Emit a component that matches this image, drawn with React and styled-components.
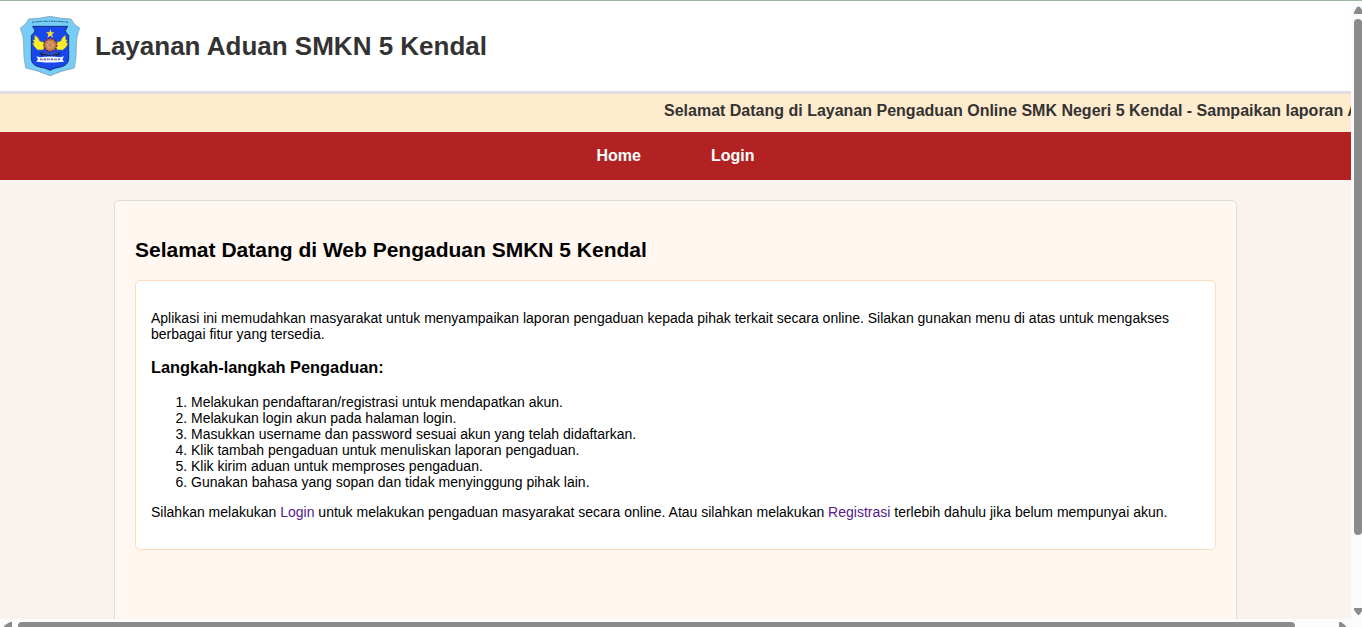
import React from "react";
import styled, { createGlobalStyle } from "styled-components";

const GlobalStyle = createGlobalStyle`
  * { box-sizing: border-box; }
  body {
    margin: 0;
    overflow: hidden;
    font-family: "Liberation Sans", Arial, sans-serif;
    font-size: 14px;
    color: #000;
  }
`;

const Viewport = styled.div`
  display: grid;
  grid-template-columns: minmax(0, 1fr) 11px;
  grid-template-rows: minmax(0, 1fr) 8px;
  width: 1362px;
  height: 627px;
  overflow: hidden;
  background: #fcfcfc;
  border-top: 1px solid #9fb59f;
`;

const Page = styled.div`
  overflow: hidden;
  background: #f8f3ec;
`;

const Header = styled.header`
  display: flex;
  align-items: center;
  gap: 15px;
  height: 93px;
  padding: 0 20px;
  background: #fff;
  border-bottom: 3px solid #dfdfdf;
`;

const Emblem = styled.svg`
  display: block;
  width: 60px;
  height: 60px;
`;

const SiteTitle = styled.h1`
  margin: 0;
  font-size: 26px;
  line-height: 30px;
  color: #333;
`;

const Ticker = styled.div`
  height: 38px;
  padding: 8px 0 0 664px;
  overflow: hidden;
  white-space: nowrap;
  background: #ffebcd;
  color: #333;
  font-size: 16px;
  font-weight: bold;
  line-height: 18px;
`;

const Nav = styled.nav`
  display: flex;
  justify-content: center;
  gap: 70px;
  height: 48px;
  background: #b22222;
`;

const NavLink = styled.a`
  color: #fff;
  font-size: 16px;
  font-weight: bold;
  line-height: 47px;
  text-decoration: none;
`;

const Container = styled.main`
  width: 1123px;
  height: 600px;
  margin: 20px auto 0;
  padding: 20px;
  background: #fff7f0;
  border: 1px solid #dcdedc;
  border-radius: 5px;
`;

const Heading = styled.h2`
  margin: 0.83em 0;
  font-size: 21px;
`;

const Panel = styled.section`
  padding: 15px;
  background: #fff;
  border: 1px solid #fbdcbd;
  border-radius: 5px;
`;

const Paragraph = styled.p`
  margin: 14px 0;
`;

const SubHeading = styled.h3`
  margin: 1em 0;
  font-size: 16.38px;
`;

const Steps = styled.ol`
  margin: 14px 0;
  padding-left: 40px;
`;

const TextLink = styled.a`
  color: #551a8b;
  text-decoration: none;
`;

const VerticalBar = styled.div`
  display: flex;
  flex-direction: column;
  align-items: flex-end;
  padding: 5px 0 4px;
`;

const VerticalThumb = styled.div`
  width: 8px;
  height: 516px;
  margin: 5px 0 auto;
  background: #8b8b8b;
  border-radius: 4px;
`;

const HorizontalBar = styled.div`
  display: flex;
  align-items: flex-end;
  overflow: hidden;
  padding: 0 4px;
`;

const HorizontalThumb = styled.div`
  width: 1277px;
  height: 5px;
  margin: 0 auto 0 6px;
  background: #8b8b8b;
  border-radius: 4px 4px 0 0;
`;

const Arrow = styled.svg`
  display: block;
  flex: none;
  width: 8px;
  height: ${(p) => p.$height}px;
  fill: #8b8b8b;
`;

const steps = [
  "Melakukan pendaftaran/registrasi untuk mendapatkan akun.",
  "Melakukan login akun pada halaman login.",
  "Masukkan username dan password sesuai akun yang telah didaftarkan.",
  "Klik tambah pengaduan untuk menuliskan laporan pengaduan.",
  "Klik kirim aduan untuk memproses pengaduan.",
  "Gunakan bahasa yang sopan dan tidak menyinggung pihak lain.",
];

const SchoolEmblem = () => (
  <Emblem viewBox="0 0 180 180" aria-label="SMKN 5 Kendal">
    <path
      d="M1 36 Q18 27 26 9 Q62 8 90 1 Q118 8 153 9 Q162 28 179 36 Q168 62 169 90 Q170 124 163 156 Q124 164 90 179 Q56 164 17 156 Q10 124 11 90 Q12 62 1 36Z"
      fill="#75cdf8"
      stroke="#7a929c"
      strokeWidth="2"
    />
    <path d="M36 19 Q90 12 145 19" fill="none" stroke="#28536a" strokeWidth="3" strokeDasharray="5 2 3 3 7 2" />
    <path
      d="M38 31 H143 L136 44 Q138 52 146 58 V130 Q144 148 122 153 Q104 155 90 163 Q76 155 58 153 Q36 148 34 130 V58 Q43 52 45 44Z"
      fill="#1747ed"
      stroke="#13235c"
      strokeWidth="2.5"
    />
    <path d="M91 39 L94 49 H103 L96 55 L99 65 L91 59 L82 65 L85 55 L78 49 H88Z" fill="#ffdc35" />
    <g fill="#fff02b" stroke="#8b8b22" strokeWidth="1.5">
      <path d="M44 58 Q55 63 59 76 L73 79 L76 87 L70 101 L53 102 L47 96 L42 90 L38 82 L43 80 L39 72 L44 71Z" />
      <path d="M137 58 Q126 63 122 76 L109 79 L105 87 L111 101 L128 102 L135 96 L140 90 L144 82 L138 80 L142 72 L137 71Z" />
    </g>
    <path d="M47 74 L58 84 M45 84 L58 91 M134 74 L123 84 M136 84 L123 91" stroke="#d0c421" strokeWidth="1.5" />
    <circle cx="91" cy="87" r="19" fill="#c98b58" stroke="#762d42" strokeWidth="5" strokeDasharray="6 3" />
    <circle cx="91" cy="87" r="13" fill="#dda268" stroke="#b16b45" strokeWidth="2" />
    <path d="M81 81 L101 94 M100 80 L82 94 M91 75 V99" stroke="#b57651" strokeWidth="2" />
    <path d="M59 111 Q77 106 90 117 Q104 106 122 111 L116 119 Q100 115 90 122 Q78 115 64 119Z" fill="#15234f" />
    <path d="M67 112 Q80 109 88 117 M93 117 Q103 109 115 112" fill="none" stroke="#8fa3cc" strokeWidth="1.5" />
    <path d="M49 121 L60 124 Q90 119 121 124 L132 121 L127 130 L132 137 L121 138 Q90 141 60 138 L49 137 L54 130Z" fill="#f3f5ff" />
    <path d="M60 130 H120" stroke="#6b7590" strokeWidth="5" strokeDasharray="5 2 3 2 6 3" />
  </Emblem>
);

export default function App() {
  return (
    <>
      <GlobalStyle />
      <Viewport>
        <Page>
          <Header>
            <SchoolEmblem />
            <SiteTitle>Layanan Aduan SMKN 5 Kendal</SiteTitle>
          </Header>
          <Ticker>
            Selamat Datang di Layanan Pengaduan Online SMK Negeri 5 Kendal - Sampaikan laporan A
          </Ticker>
          <Nav>
            <NavLink>Home</NavLink>
            <NavLink>Login</NavLink>
          </Nav>
          <Container>
            <Heading>Selamat Datang di Web Pengaduan SMKN 5 Kendal</Heading>
            <Panel>
              <Paragraph>
                Aplikasi ini memudahkan masyarakat untuk menyampaikan laporan pengaduan kepada pihak terkait secara
                online. Silakan gunakan menu di atas untuk mengakses berbagai fitur yang tersedia.
              </Paragraph>
              <SubHeading>Langkah-langkah Pengaduan:</SubHeading>
              <Steps>
                {steps.map((step) => (
                  <li key={step}>{step}</li>
                ))}
              </Steps>
              <Paragraph>
                Silahkan melakukan <TextLink>Login</TextLink> untuk melakukan pengaduan masyarakat secara online. Atau
                silahkan melakukan <TextLink>Registrasi</TextLink> terlebih dahulu jika belum mempunyai akun.
              </Paragraph>
            </Panel>
          </Container>
        </Page>
        <VerticalBar>
          <Arrow $height={8} viewBox="0 0 8 8"><path d="M0 8V6L3 1Q4.500 0 6 1L8 4V8Z" /></Arrow>
          <VerticalThumb />
          <Arrow $height={7} viewBox="0 0 8 7"><path d="M0 0H8V3L6 6Q4.500 8 3 6L0 2Z" /></Arrow>
        </VerticalBar>
        <HorizontalBar>
          <Arrow $height={5} viewBox="0 0 8 5"><path d="M8 5H0Q0 4 1 3L6 0H8Z" /></Arrow>
          <HorizontalThumb />
          <Arrow $height={5} viewBox="0 0 8 5"><path d="M0 5V0H2L7 4V5Z" /></Arrow>
        </HorizontalBar>
      </Viewport>
    </>
  );
}
